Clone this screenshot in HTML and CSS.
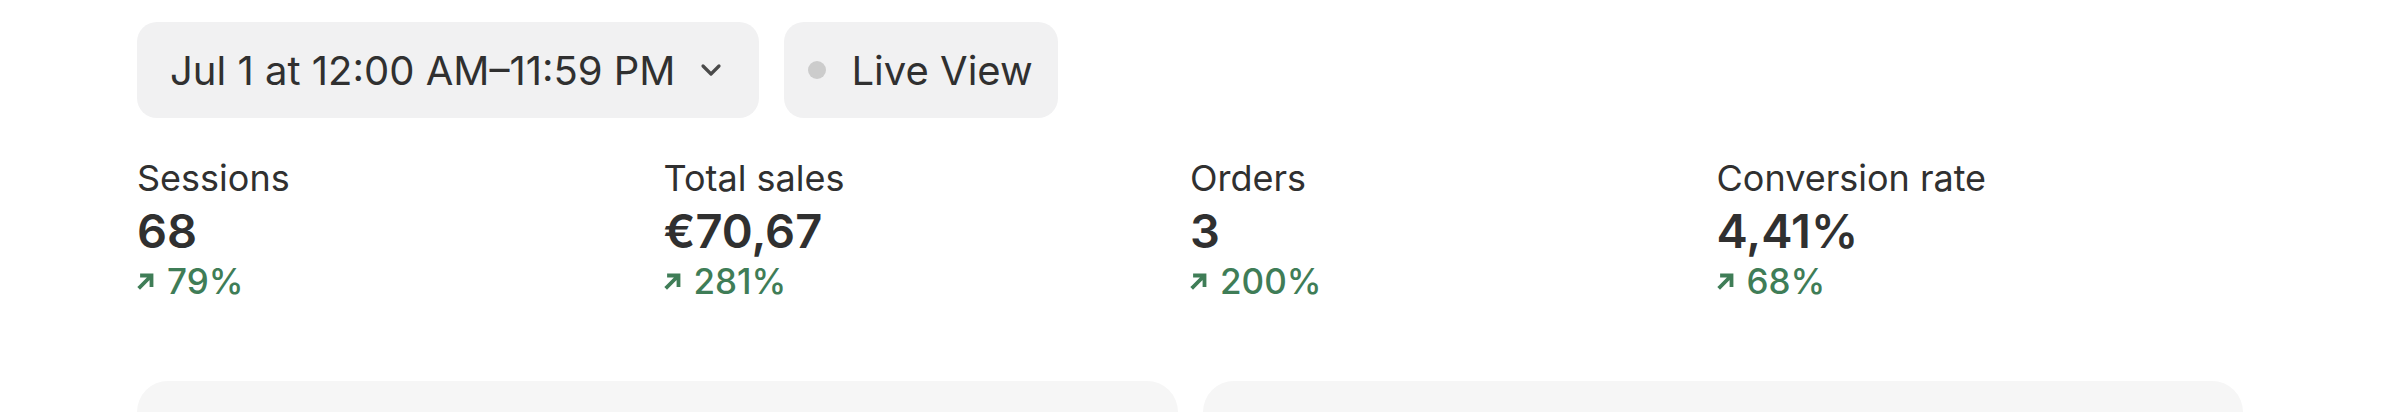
FILE: index.html
```html
<!DOCTYPE html>
<html lang="en">
<head>
    <meta charset="UTF-8" />
    <title>Overview</title>
    <link rel="stylesheet" href="styles.css">
</head>
<body>
    <div class="page">
        <div class="toolbar">
            <button class="pill date-pill">
                <span>Jul 1 at 12:00 AM–11:59 PM</span>
                <svg class="chevron" width="22" height="14" viewBox="0 0 22 14"><path d="M3 3 L11 11 L19 3" fill="none" stroke="#4a4a4a" stroke-width="3.2" stroke-linecap="round" stroke-linejoin="round"/></svg>
            </button>
            <button class="pill live-pill">
                <span class="dot"></span>
                <span>Live View</span>
            </button>
        </div>

        <div class="metrics">
            <div class="metric">
                <div class="label">Sessions</div>
                <div class="value">68</div>
                <div class="change"><svg class="arrow" width="18" height="18" viewBox="0 0 18 18"><path d="M3 15 L13 5 M5 3.5 H14.5 V13" fill="none" stroke="#3f7d57" stroke-width="3.8" stroke-linecap="square"/></svg>79%</div>
            </div>
            <div class="metric">
                <div class="label">Total sales</div>
                <div class="value">€70,67</div>
                <div class="change"><svg class="arrow" width="18" height="18" viewBox="0 0 18 18"><path d="M3 15 L13 5 M5 3.5 H14.5 V13" fill="none" stroke="#3f7d57" stroke-width="3.8" stroke-linecap="square"/></svg>281%</div>
            </div>
            <div class="metric">
                <div class="label">Orders</div>
                <div class="value">3</div>
                <div class="change"><svg class="arrow" width="18" height="18" viewBox="0 0 18 18"><path d="M3 15 L13 5 M5 3.5 H14.5 V13" fill="none" stroke="#3f7d57" stroke-width="3.8" stroke-linecap="square"/></svg>200%</div>
            </div>
            <div class="metric">
                <div class="label">Conversion rate</div>
                <div class="value">4,41%</div>
                <div class="change"><svg class="arrow" width="18" height="18" viewBox="0 0 18 18"><path d="M3 15 L13 5 M5 3.5 H14.5 V13" fill="none" stroke="#3f7d57" stroke-width="3.8" stroke-linecap="square"/></svg>68%</div>
            </div>
        </div>

        <div class="cards">
            <div class="card"></div>
            <div class="card"></div>
        </div>
    </div>
</body>
</html>
```

FILE: styles.css
```css
body {
    margin: 0;
    background: #ffffff;
    color: #303030;
    font-family: Inter, "Noto Sans", sans-serif;
    overflow: hidden;
}
.page {
    width: 2106px;
    padding: 22px 0 0 137px;
}
.toolbar {
    display: flex;
    gap: 25px;
}
.pill {
    display: flex;
    align-items: center;
    height: 96px;
    border: none;
    border-radius: 20px;
    background: #f1f1f2;
    color: #303030;
    font-family: inherit;
    font-size: 40px;
}
.date-pill {
    padding: 0 37px 0 33px;
}
.chevron {
    margin-left: 24px;
}
.live-pill {
    padding: 0 25px 0 24px;
}
.dot {
    width: 18px;
    height: 18px;
    border-radius: 50%;
    background: #cccccc;
    margin-right: 26px;
}
.metrics {
    display: grid;
    grid-template-columns: repeat(4, 1fr);
    margin-top: 38px;
}
.label {
    font-size: 36px;
    line-height: 45px;
}
.value {
    font-size: 47px;
    font-weight: 600;
    line-height: 60px;
}
.change {
    display: flex;
    align-items: center;
    color: #3f7d57;
    font-size: 35px;
    font-weight: 500;
    line-height: 40px;
}
.arrow {
    margin-right: 12px;
}
.cards {
    display: grid;
    grid-template-columns: 1fr 1fr;
    gap: 25px;
    margin-top: 80px;
}
.card {
    height: 31px;
    background: #f6f6f6;
    border-radius: 32px 32px 0 0;
}
```
